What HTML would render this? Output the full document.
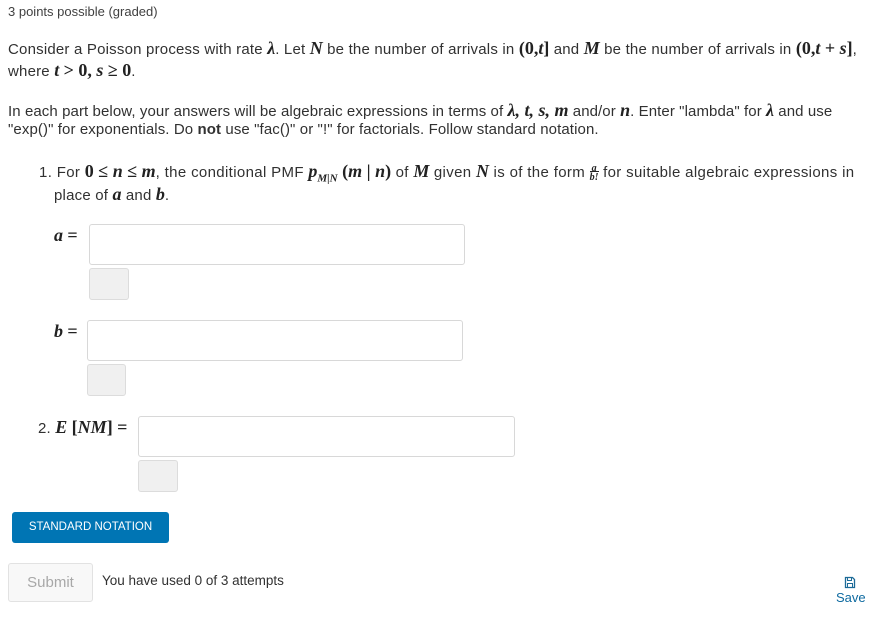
<!DOCTYPE html>
<html><head><meta charset="utf-8"><style>
body{margin:0;width:878px;height:617px;background:#fff;font-family:"Liberation Sans",sans-serif;color:#313131;position:relative;overflow:hidden}
.t{position:absolute;white-space:nowrap;font-size:15px;letter-spacing:0.2px}
.m{font-family:"Liberation Serif",serif;font-style:italic;font-weight:bold;font-size:18px;letter-spacing:0;color:#222}
.r{font-family:"Liberation Serif",serif;font-weight:bold;font-size:18px;letter-spacing:0;color:#222}
.box{position:absolute;border:1px solid #d8d8d8;border-radius:3px;background:#fff;box-sizing:border-box}
.sm{position:absolute;border:1px solid #dcdcdc;border-radius:3px;background:#f0f0f0;box-sizing:border-box}
</style></head><body>
<div class="t" style="left:8px;top:4px;font-size:13px;letter-spacing:0;color:#414141">3 points possible (graded)</div>
<div class="t" style="left:8px;top:38px">Consider a Poisson process with rate <span class="m">λ</span>. Let <span class="m">N</span> be the number of arrivals in <span class="r">(0,<i>t</i>]</span> and <span class="m">M</span> be the number of arrivals in <span class="r">(0,<i>t</i> + <i>s</i>]</span>,</div>
<div class="t" style="left:8px;top:60px">where <span class="m">t</span> <span class="r">&gt; 0, <i>s</i> ≥ 0</span>.</div>
<div class="t" style="left:8px;top:100px;letter-spacing:0.09px">In each part below, your answers will be algebraic expressions in terms of <span class="m">λ, t, s, m</span> and/or <span class="m">n</span>. Enter "lambda" for <span class="m">λ</span> and use</div>
<div class="t" style="left:8px;top:121px;letter-spacing:0.1px">"exp()" for exponentials. Do <b>not</b> use "fac()" or "!" for factorials. Follow standard notation.</div>
<div class="t" style="left:39px;top:161px;letter-spacing:0.35px">1. For <span class="r">0 ≤ <i>n</i> ≤ <i>m</i></span>, the conditional PMF <span class="m">p<sub style="font-size:11px">M|N</sub></span> <span class="r">(<i>m</i> | <i>n</i>)</span> of <span class="m">M</span> given <span class="m">N</span> is of the form <span class="m" style="font-size:10px;display:inline-block;text-align:center;line-height:9px;vertical-align:middle">a<br><span style="border-top:1px solid #222">b!</span></span> for suitable algebraic expressions in</div>
<div class="t" style="left:54px;top:184px">place of <span class="m">a</span> and <span class="m">b</span>.</div>
<div class="t" style="left:54px;top:225px"><span class="m">a</span> <span class="r">=</span></div>
<div class="box" style="left:89px;top:224px;width:376px;height:41px"></div>
<div class="sm" style="left:89px;top:268px;width:40px;height:32px"></div>
<div class="t" style="left:54px;top:321px"><span class="m">b</span> <span class="r">=</span></div>
<div class="box" style="left:87px;top:320px;width:376px;height:41px"></div>
<div class="sm" style="left:87px;top:364px;width:39px;height:32px"></div>
<div class="t" style="left:38px;top:417px">2. <span class="m">E</span> <span class="r">[<i>NM</i>] =</span></div>
<div class="box" style="left:138px;top:416px;width:377px;height:41px"></div>
<div class="sm" style="left:138px;top:460px;width:40px;height:32px"></div>
<div style="position:absolute;left:12px;top:512px;width:157px;height:31px;background:#0075b4;border-radius:3px;color:#fff;font-size:11.5px;text-align:center;line-height:31px">STANDARD NOTATION</div>
<div style="position:absolute;left:8px;top:563px;width:85px;height:39px;border:1px solid #e2e2e2;border-radius:3px;background:#f8f8f8;box-sizing:border-box;color:#a8a8a8;font-size:15px;text-align:center;line-height:37px">Submit</div>
<div class="t" style="left:102px;top:573px;font-size:13.5px;letter-spacing:0;color:#313131">You have used 0 of 3 attempts</div>
<svg style="position:absolute;left:844px;top:576px" width="12" height="13" viewBox="0 0 12 13"><path d="M1.5 1.5h7l2 2v8h-9z" fill="none" stroke="#1d6b98" stroke-width="1.3"/><rect x="3.5" y="1.5" width="4" height="3" fill="none" stroke="#1d6b98"/><rect x="3.5" y="7.5" width="5" height="4" fill="none" stroke="#1d6b98"/></svg>
<div class="t" style="left:836px;top:590px;font-size:13px;letter-spacing:0;color:#0e6aa0">Save</div>
</body></html>
